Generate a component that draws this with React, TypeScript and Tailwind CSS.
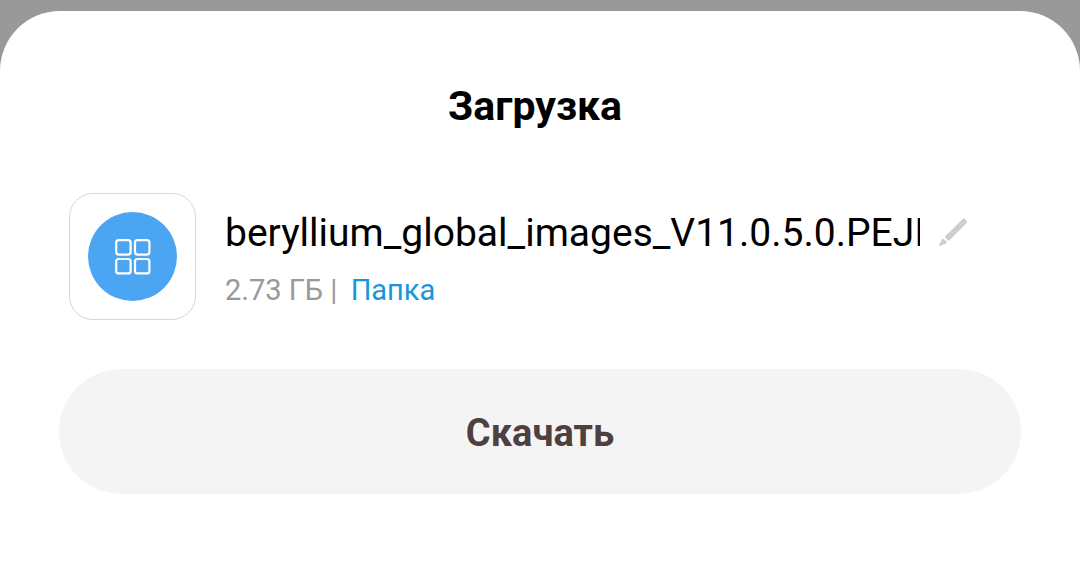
export default function App() {
  return (
    <div className="min-h-screen bg-[#999999] pt-[11px] font-['Roboto',sans-serif] flex flex-col">
      <main className="flex-1 rounded-t-[60px] bg-white px-[59px] pb-[75px] pt-[70px]">
        <h1 className="pr-[10px] text-center text-[41px] leading-[50px] font-bold text-black">Загрузка</h1>
        <section className="mt-[62px] flex items-center pl-[10px] pr-[50px]">
          <div className="flex size-[127px] shrink-0 items-center justify-center rounded-[24px] border border-[#d8d8d8]">
            <svg viewBox="0 0 90 90" className="size-[90px]" aria-hidden="true">
              <circle cx="44.5" cy="44.5" r="44.5" fill="#4ba5f2" />
              <g fill="none" stroke="#fff" strokeWidth="2.2">
                <rect x="28.2" y="28.2" width="14.4" height="14.4" rx="2.5" />
                <rect x="47" y="28.2" width="14.4" height="14.4" rx="2.5" />
                <rect x="28.2" y="47" width="14.4" height="14.4" rx="2.5" />
                <rect x="47" y="47" width="14.4" height="14.4" rx="2.5" />
              </g>
            </svg>
          </div>
          <div className="ml-[29px] min-w-0 flex-1 pt-[4px]">
            <div className="flex items-center">
              <p className="min-w-0 flex-1 overflow-hidden whitespace-nowrap text-[39px] leading-[50px] text-black">beryllium_global_images_V11.0.5.0.PEJI</p>
              <button type="button" aria-label="Переименовать" className="ml-[19px] shrink-0">
                <svg viewBox="0 0 32 32" className="size-8" aria-hidden="true">
                  <g fill="#cdcdcd" stroke="#cdcdcd" strokeLinejoin="round">
                    <path d="M7.2 20 24.8 2.6 27 4.8 9.6 22.4z" strokeWidth="2.4" />
                    <path d="M4 22.6 6.8 25.4 1 28z" strokeWidth="1.8" />
                  </g>
                </svg>
              </button>
            </div>
            <p className="mt-[12px] text-[29px] leading-[40px] text-[#999999]">
              2.73 ГБ | <a href="#" className="ml-[6px] text-[#1795e0]">Папка</a>
            </p>
          </div>
        </section>
        <button type="button" className="mt-[49px] h-[125px] w-full rounded-full bg-[#f4f4f4] pt-[4px] text-[38px] font-bold text-[#4f4040]">Скачать</button>
      </main>
    </div>
  );
}
